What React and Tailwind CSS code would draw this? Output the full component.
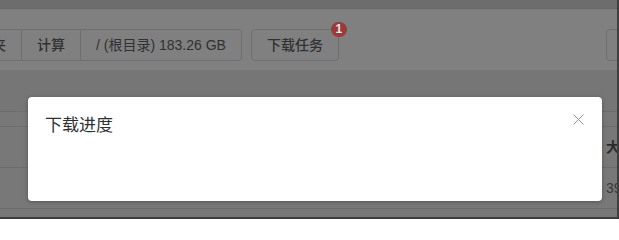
import React from "react";

const cjk = { fontFamily: '"Liberation Sans", "Noto Sans CJK SC", sans-serif' };

export default function App() {
  return (
    <div
      className="relative w-[619px] h-[219px] overflow-hidden bg-[#767676] flex flex-col border-r-2 border-b-2 border-r-[#3f3f3f] border-b-[#3c3c3c]"
      style={cjk}
    >
      {/* top band */}
      <div className="h-[9px] shrink-0 bg-[#6d6d6d] border-b border-[#686868]" />

      {/* toolbar */}
      <div className="h-[61px] shrink-0 bg-[#808080] pt-[20px] flex items-start overflow-hidden">
        <div className="flex shrink-0 ml-[-52px] text-[14px] leading-[14px] font-medium text-[#303133]">
          <div className="px-[15px] py-[8px] border border-[#6e6f73] shrink-0">文件夹</div>
          <div className="px-[15px] py-[8px] border border-[#6e6f73] border-l-0 shrink-0">计算</div>
          <div className="px-[15px] py-[8px] border border-[#6e6f73] border-l-0 rounded-r-[4px] shrink-0 font-normal">
            / (根目录) 183.26 GB
          </div>
        </div>
        <div className="relative ml-[9px] shrink-0 px-[15px] py-[8px] border border-[#6e6f73] rounded-[4px] text-[14px] leading-[14px] font-medium text-[#303133]">
          下载任务
          <span className="absolute -right-[9px] -top-[8px] w-[16px] h-[15px] rounded-full bg-[#9a3a3a] text-[#e6e6e6] text-[12px] leading-[15px] font-bold flex items-center justify-center">
            1
          </span>
        </div>
        <div className="ml-[267px] shrink-0 px-[15px] py-[8px] border border-[#6e6f73] rounded-[4px] text-[14px] leading-[14px] text-[#303133]">
          新建
        </div>
      </div>

      {/* lower area */}
      <div className="h-[41px] shrink-0 bg-[#767676]" />
      <div className="flex-1 flex flex-col bg-[#787878]">
        <div className="h-[15px] shrink-0 border-t border-[#6d6d6d]" />
        <div className="h-[41px] shrink-0 border-t border-[#6d6d6d] flex items-center">
          <div className="w-[606px] shrink-0" />
          <div className="text-[14px] font-bold text-[#2b2b2b] whitespace-nowrap">大小</div>
        </div>
        <div className="h-[41px] shrink-0 border-t border-[#6d6d6d] flex items-center">
          <div className="w-[606px] shrink-0" />
          <div className="text-[14px] text-[#393939] whitespace-nowrap">39.2 MB</div>
        </div>
        <div className="flex-1 border-t border-[#6d6d6d]" />
      </div>

      {/* dialog */}
      <div className="absolute left-[28px] top-[97px] w-[574px] h-[104px] bg-white rounded-[4px] shadow-[0_1px_4px_rgba(0,0,0,0.3)]">
        <div
          className="pt-[15px] pl-[17px] text-[17px] leading-[24px] text-[#303133]"
          style={{ fontFamily: '"Noto Sans CJK SC", sans-serif' }}
        >
          下载进度
        </div>
        <button className="absolute right-[18px] top-[16px] w-[12px] h-[12px] flex items-center justify-center">
          <svg width="11" height="11" viewBox="0 0 11 11">
            <path d="M0.5 0.5 L10.5 10.5 M10.5 0.5 L0.5 10.5" stroke="#909399" strokeWidth="1" fill="none" />
          </svg>
        </button>
      </div>
    </div>
  );
}
